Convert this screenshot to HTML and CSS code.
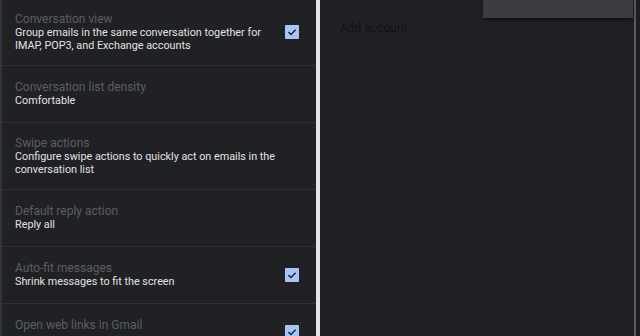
FILE: index.html
```html
<!DOCTYPE html>
<html lang="en">
<head>
  <meta charset="UTF-8">
  <meta name="viewport" content="width=device-width, initial-scale=1.0">
  <title>Settings</title>
  <link rel="stylesheet" href="styles.css">
</head>
<body>

  <section class="settings">
    <div class="row first">
      <div class="text">
        <p class="title">Conversation view</p>
        <p class="desc">Group emails in the same conversation together for IMAP, POP3, and Exchange accounts</p>
      </div>
      <span class="check"><svg viewBox="0 0 14 14" width="14" height="14"><path d="M3.5 7.2 L6 9.5 L10.6 4.8" fill="none" stroke="#1c2a48" stroke-width="1.6"/></svg></span>
    </div>

    <div class="row">
      <div class="text">
        <p class="title">Conversation list density</p>
        <p class="desc">Comfortable</p>
      </div>
    </div>

    <div class="row">
      <div class="text">
        <p class="title">Swipe actions</p>
        <p class="desc">Configure swipe actions to quickly act on emails in the conversation list</p>
      </div>
    </div>

    <div class="row">
      <div class="text">
        <p class="title">Default reply action</p>
        <p class="desc">Reply all</p>
      </div>
    </div>

    <div class="row">
      <div class="text">
        <p class="title">Auto-fit messages</p>
        <p class="desc">Shrink messages to fit the screen</p>
      </div>
      <span class="check"><svg viewBox="0 0 14 14" width="14" height="14"><path d="M3.5 7.2 L6 9.5 L10.6 4.8" fill="none" stroke="#1c2a48" stroke-width="1.6"/></svg></span>
    </div>

    <div class="row">
      <div class="text">
        <p class="title">Open web links in Gmail</p>
        <p class="desc">&nbsp;</p>
      </div>
      <span class="check"><svg viewBox="0 0 14 14" width="14" height="14"><path d="M3.5 7.2 L6 9.5 L10.6 4.8" fill="none" stroke="#1c2a48" stroke-width="1.6"/></svg></span>
    </div>
  </section>

  <div class="split"></div>

  <section class="accounts">
    <div class="menu"></div>
    <p class="add">Add account</p>
  </section>

  <div class="edge"></div>

</body>
</html>
```

FILE: styles.css
```css
html, body {
  margin: 0;
  height: 100%;
}
body {
  background-color: #1c1d1f;
  font-family: Roboto, "Liberation Sans", sans-serif;
  display: flex;
  overflow: hidden;
}
p {
  margin: 0;
}
.settings {
  width: 314px;
  border-left: 2px solid #34353a;
  background-color: #202124;
  overflow: hidden;
}
.row {
  display: flex;
  align-items: center;
  gap: 8px;
  box-sizing: border-box;
  min-height: 57px;
  padding: 13px 17px 13px 13px;
  border-bottom: 1px solid #303134;
}
.row.first {
  margin-top: -1px;
}
.text {
  flex: 1;
}
.title {
  font-size: 12px;
  line-height: 15px;
  color: #5b5e62;
}
.desc {
  font-size: 10.8px;
  line-height: 12.5px;
  color: #e0e1e3;
}
.check {
  flex: none;
  width: 14px;
  height: 14px;
  border-radius: 1px;
  background-color: #a9c4f5;
  display: flex;
}
.split {
  width: 4px;
  background-color: #e4e4e4;
}
.accounts {
  width: 314px;
  position: relative;
  background-color: #202124;
}
.menu {
  position: absolute;
  top: 0;
  right: 1px;
  width: 150px;
  height: 18px;
  background-color: #3c3d40;
  box-shadow: 0 2px 3px rgba(0, 0, 0, 0.5);
}
.add {
  padding: 21px 0 0 20px;
  font-size: 12px;
  line-height: 15px;
  color: #111214;
}
.edge {
  width: 2px;
  background-color: #5a5b5e;
}
```
